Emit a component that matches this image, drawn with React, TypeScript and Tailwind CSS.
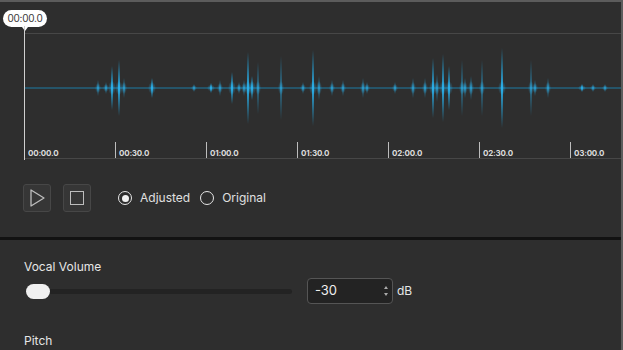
import React from 'react'

// spikes of the waveform: [x offset from 24, half height, width]
const SPIKES: [number, number, number][] = [
  [74, 8, 1], [82, 6, 1], [88, 22, 2], [95, 28, 2], [100, 10, 1], [128, 10, 2],
  [170, 4, 1], [187, 5, 2], [196, 8, 1], [208, 16, 2], [215, 6, 1], [220, 8, 1],
  [224, 36, 2], [228, 12, 2], [234, 26, 1], [257, 32, 1], [279, 6, 1],
  [289, 38, 2], [295, 12, 1], [308, 8, 1], [319, 8, 1], [339, 10, 1], [343, 6, 1],
  [371, 6, 1], [389, 10, 1], [401, 10, 1], [409, 30, 2], [413, 14, 1],
  [419, 34, 2], [425, 22, 2], [438, 28, 1], [441, 10, 1], [447, 12, 1],
  [458, 28, 1], [478, 40, 2], [507, 28, 1], [511, 8, 1], [524, 10, 1],
  [558, 4, 2], [569, 4, 1], [581, 4, 1],
]

const TICKS = ['00:00.0', '00:30.0', '01:00.0', '01:30.0', '02:00.0', '02:30.0', '03:00.0']

function Waveform() {
  return (
    <svg width="597" height="108" viewBox="0 0 597 108" className="block">
      <defs>
        <linearGradient id="spike" x1="0" y1="0" x2="0" y2="1">
          <stop offset="0" stopColor="#1fa3dc" stopOpacity="0" />
          <stop offset="0.5" stopColor="#2bb0ea" stopOpacity="1" />
          <stop offset="1" stopColor="#1fa3dc" stopOpacity="0" />
        </linearGradient>
        <radialGradient id="glow">
          <stop offset="0" stopColor="#2bb0ea" stopOpacity="0.6" />
          <stop offset="1" stopColor="#2bb0ea" stopOpacity="0" />
        </radialGradient>
      </defs>
      <line x1="0" y1="54" x2="597" y2="54" stroke="#1b8fc2" strokeWidth="1" opacity="0.8" />
      {SPIKES.map(([x, h, w], i) => (
        <g key={i}>
          <rect x={x - w / 2} y={54 - h} width={w} height={h * 2} fill="url(#spike)" />
          <ellipse cx={x} cy={54} rx={w + 2} ry={Math.min(h, 12) / 2 + 1} fill="url(#glow)" />
        </g>
      ))}
    </svg>
  )
}

function Radio({ label, checked }: { label: string; checked?: boolean }) {
  return (
    <label className="flex items-center gap-[8px] text-[12px] text-[#e0e0e0]">
      <span className="flex h-[14px] w-[14px] items-center justify-center rounded-full border-[1.5px] border-[#e6e6e6]">
        {checked && <span className="h-[7px] w-[7px] rounded-full bg-[#f2f2f2]" />}
      </span>
      {label}
    </label>
  )
}

export default function App() {
  return (
    <div className="h-[350px] w-[623px] overflow-hidden border-t-2 border-r-2 border-[#5c5c5c] bg-[#2e2e2e] font-['Inter','Noto_Sans',sans-serif]">
      {/* waveform + transport */}
      <section className="relative h-[235px]">
        {/* playhead tooltip */}
        <div className="absolute left-[3px] top-[8px] flex flex-col items-center">
          <div className="flex h-[17px] w-[44px] items-center justify-center rounded-full bg-white text-[10px] tracking-tight text-[#3a3a3a]">
            00:00.0
          </div>
          <div className="h-0 w-0 border-x-[3px] border-t-[4px] border-x-transparent border-t-white" />
        </div>
        <div className="absolute left-[24px] top-[24px] h-[134px] w-px bg-[#cfcfcf]" />

        <div className="ml-[24px] pt-[31px]">
          <div className="border-y border-[#474747]">
            <Waveform />
            <div className="grid h-[16px] grid-cols-[repeat(7,91px)]">
              {TICKS.map((t) => (
                <div key={t} className="flex items-end border-l border-[#bdbdbd] pb-[1px] pl-[3px] text-[8px] font-bold leading-none tracking-tight text-[#dcdcdc]">
                  {t}
                </div>
              ))}
            </div>
          </div>
        </div>

        <div className="flex items-center pl-[23px] pt-[25px]">
          <button className="flex h-[28px] w-[28px] items-center justify-center rounded-[3px] border border-[#474747] bg-[#363636]">
            <svg width="18" height="20" viewBox="0 0 18 20" fill="none" stroke="#bdbdbd" strokeWidth="1.3">
              <path d="M3 2 L16 10 L3 18 Z" strokeLinejoin="round" />
            </svg>
          </button>
          <button className="ml-[12px] flex h-[28px] w-[28px] items-center justify-center rounded-[3px] border border-[#474747] bg-[#363636]">
            <span className="h-[14px] w-[14px] border-[1.3px] border-[#bdbdbd]" />
          </button>
          <div className="ml-[27px] flex items-center gap-[10px]">
            <Radio label="Adjusted" checked />
            <Radio label="Original" />
          </div>
        </div>
      </section>

      <div className="h-[3px] bg-[#121212]" />

      {/* vocal settings */}
      <section className="px-[24px] pt-[19px]">
        <div className="text-[12px] leading-[16px] text-[#e6e6e6]">Vocal Volume</div>
        <div className="mt-[3px] flex items-center">
          <div className="relative flex h-[16px] w-[270px] items-center pl-[2px]">
            <div className="absolute inset-x-[2px] h-[5px] rounded-full bg-[#232323]" />
            <div className="relative h-[15px] w-[24px] rounded-full bg-[#f0f0f0]" />
          </div>
          <div className="ml-[13px] flex h-[26px] w-[86px] items-center justify-between rounded-[4px] border border-[#555] bg-[#232323] pl-[7px] pr-[4px]">
            <span className="text-[13px] text-[#eeeeee]">-30</span>
            <span className="flex flex-col items-center gap-[4px]">
              <span className="h-0 w-0 border-x-[2px] border-b-[3px] border-x-transparent border-b-[#aaa]" />
              <span className="h-0 w-0 border-x-[2px] border-t-[3px] border-x-transparent border-t-[#aaa]" />
            </span>
          </div>
          <span className="ml-[4px] text-[12px] text-[#e6e6e6]">dB</span>
        </div>
        <div className="mt-[29px] text-[12px] leading-[16px] text-[#e6e6e6]">Pitch</div>
      </section>
    </div>
  )
}
